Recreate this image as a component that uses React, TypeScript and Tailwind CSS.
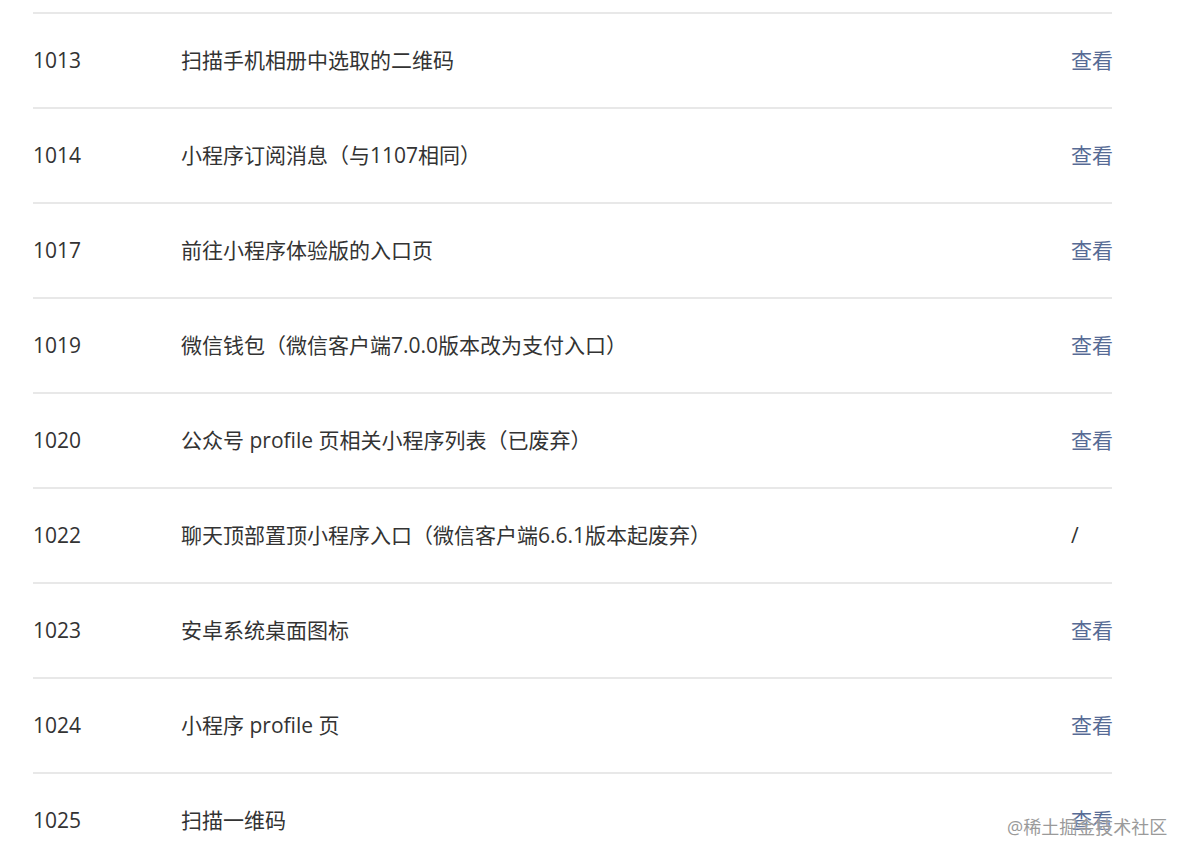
import React from "react";

const rows: [string, string, string][] = [
  ["1013", "扫描手机相册中选取的二维码", "查看"],
  ["1014", "小程序订阅消息（与1107相同）", "查看"],
  ["1017", "前往小程序体验版的入口页", "查看"],
  ["1019", "微信钱包（微信客户端7.0.0版本改为支付入口）", "查看"],
  ["1020", "公众号 profile 页相关小程序列表（已废弃）", "查看"],
  ["1022", "聊天顶部置顶小程序入口（微信客户端6.6.1版本起废弃）", "/"],
  ["1023", "安卓系统桌面图标", "查看"],
  ["1024", "小程序 profile 页", "查看"],
  ["1025", "扫描一维码", "查看"],
];

export default function App() {
  return (
    <div
      className="relative w-[1191px] h-[860px] overflow-hidden bg-white text-[21px] text-[#333333]"
      style={{ fontFamily: '"Segoe UI", "Open Sans", "Noto Sans CJK SC", sans-serif' }}
    >
      <div className="pt-[12px] pl-[33px] w-[1112px]">
        {rows.map(([code, desc, link]) => (
          <div
            key={code}
            className="flex items-center h-[95px] border-t-2 border-[#e8e8e8]"
          >
            <div className="w-[148px] shrink-0">{code}</div>
            <div className="flex-1 whitespace-nowrap">{desc}</div>
            <div className="w-[41px] shrink-0 whitespace-nowrap">
              {link === "/" ? (
                <span className="text-[#333333]">/</span>
              ) : (
                <span className="text-[#576b95]">{link}</span>
              )}
            </div>
          </div>
        ))}
      </div>
      <div className="absolute left-[1007px] top-[814px] text-[18px] text-[#9a9a9a] [text-shadow:0_0_2px_rgba(255,255,255,0.9)] whitespace-nowrap">
        @稀土掘金技术社区
      </div>
    </div>
  );
}
